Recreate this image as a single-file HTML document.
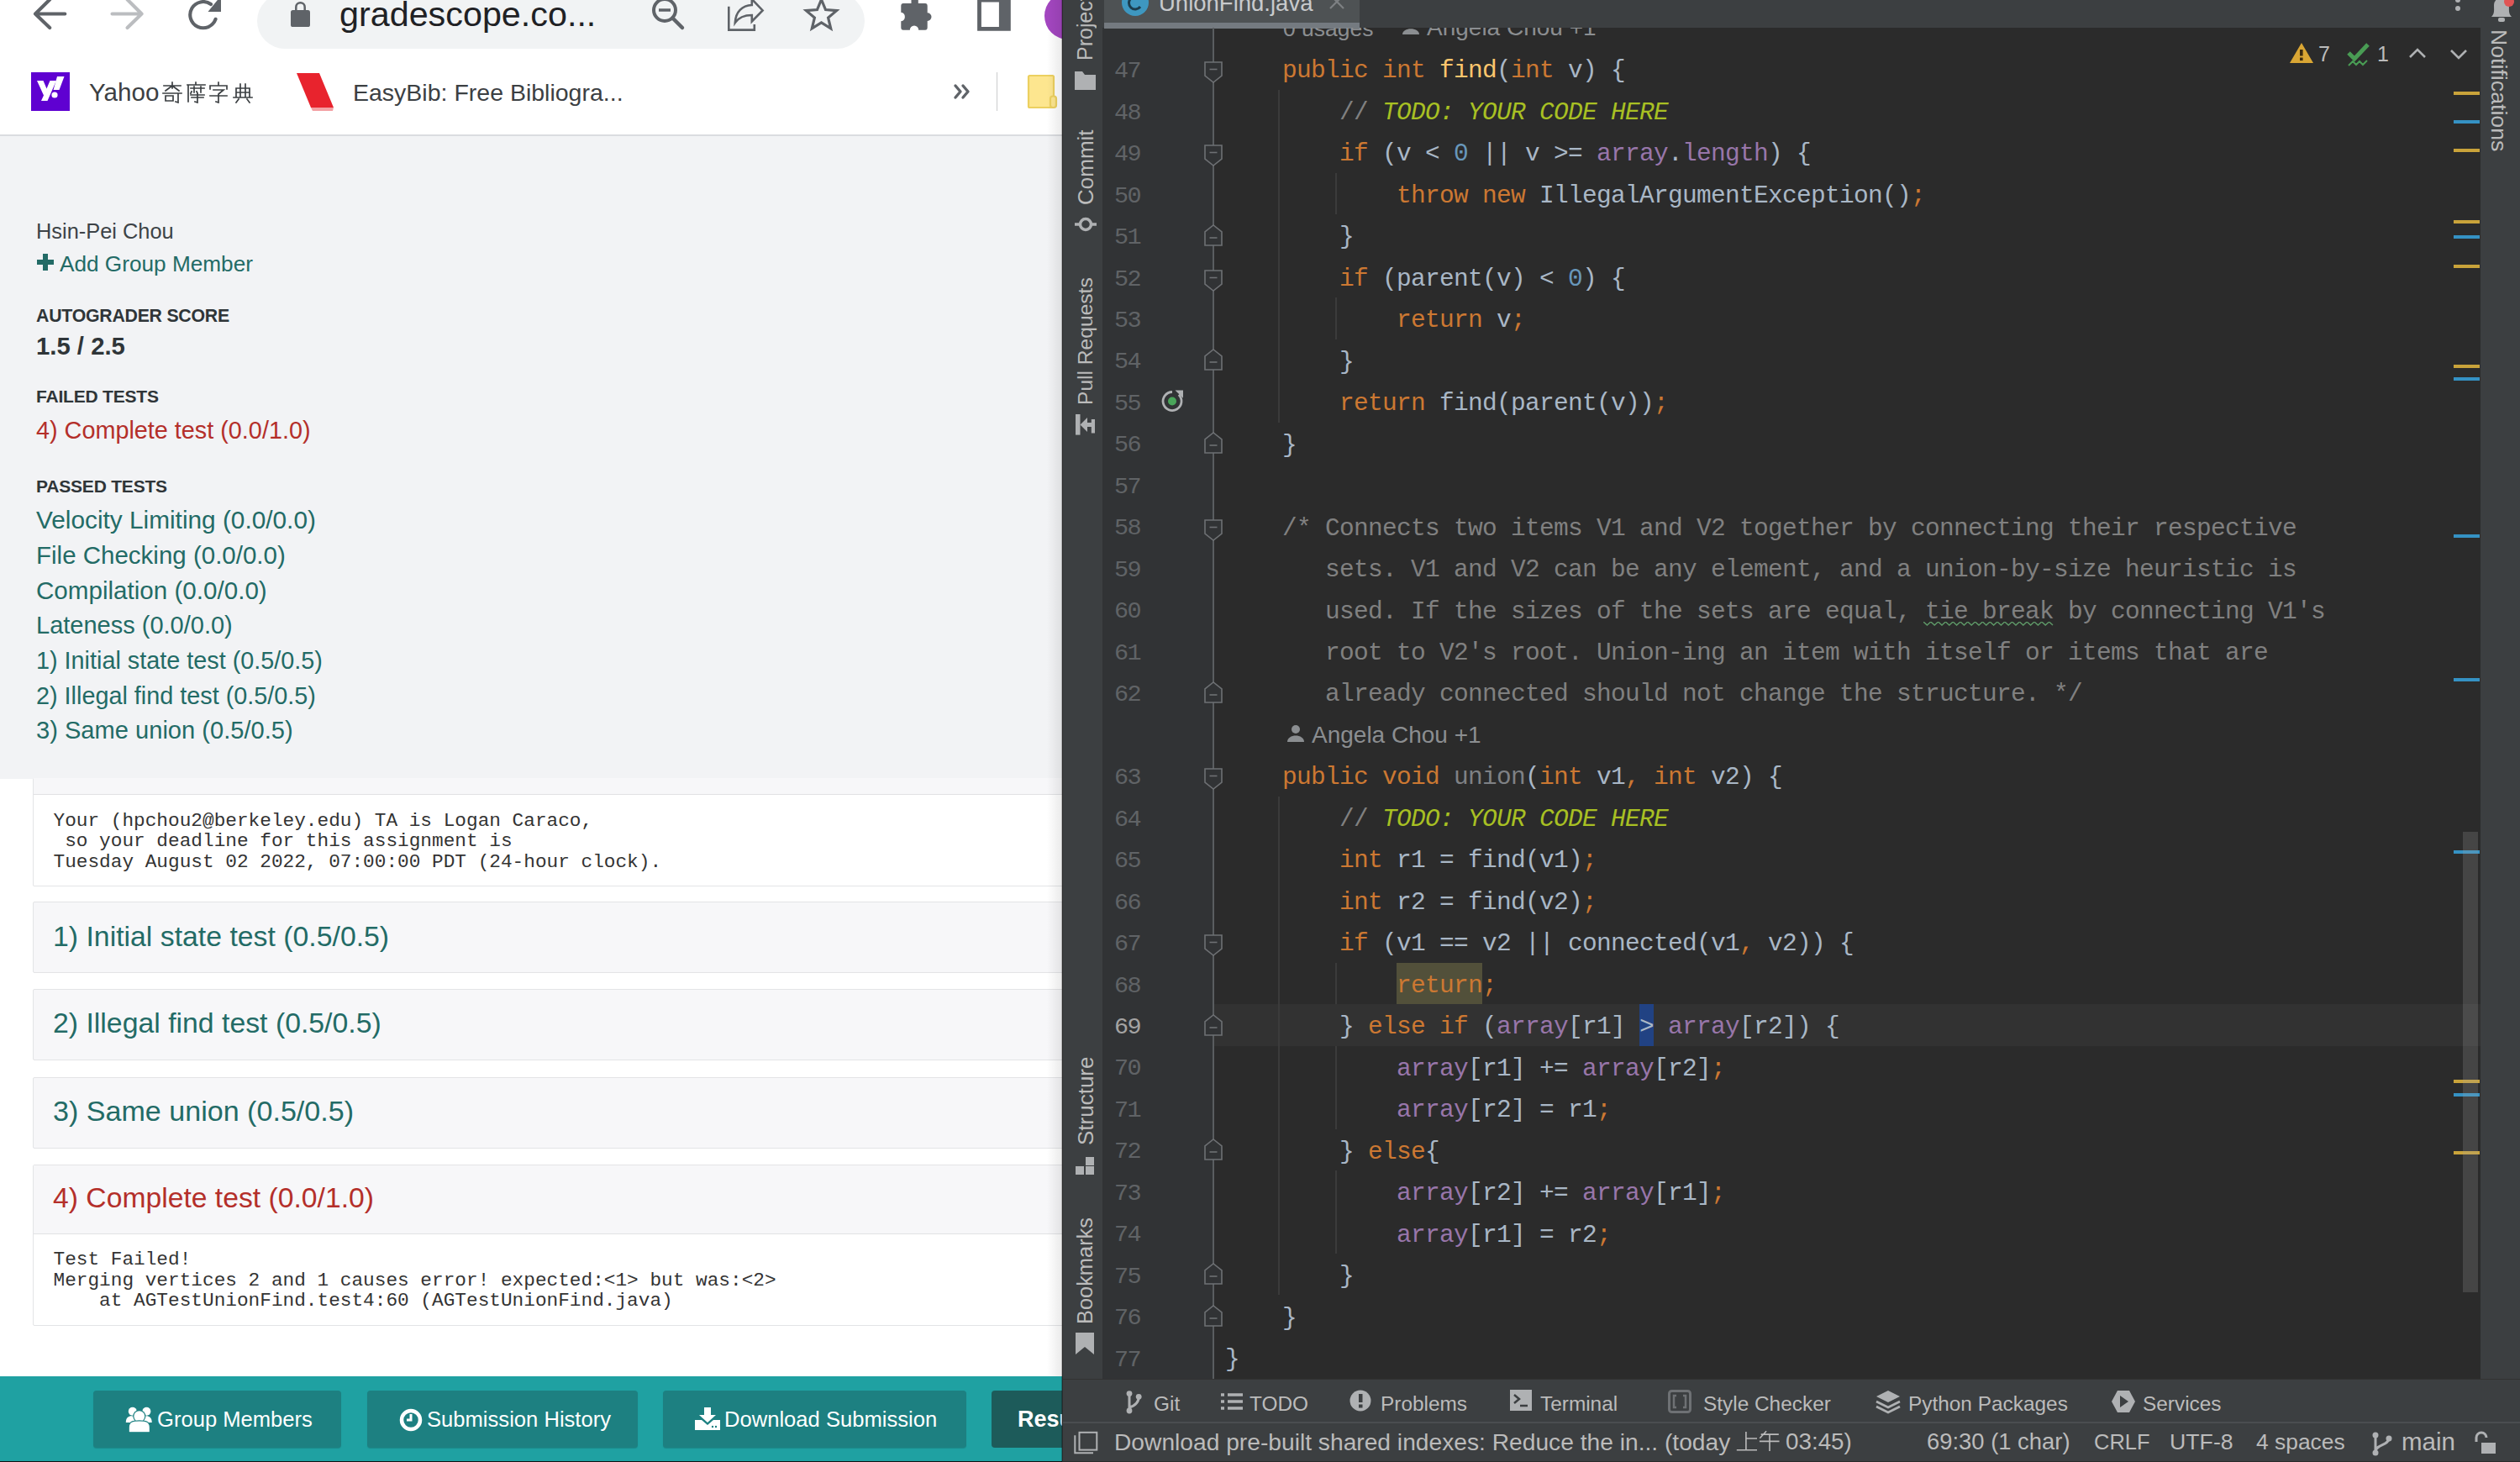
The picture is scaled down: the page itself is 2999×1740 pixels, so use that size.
<!DOCTYPE html><html><head><meta charset="utf-8"><style>
*{margin:0;padding:0;box-sizing:border-box}
html,body{width:2999px;height:1740px;overflow:hidden;background:#2b2b2b}
body{position:relative;font-family:"Liberation Sans",sans-serif}
.a{position:absolute}
.t{position:absolute;white-space:pre;line-height:1}
.code{position:absolute;left:1458.00px;white-space:pre;font-family:"Liberation Mono",monospace;font-size:29.50px;letter-spacing:-0.703px;height:49.47px;line-height:49.47px;color:#a9b7c6}
.ln{position:absolute;left:1300px;width:57px;text-align:right;font-family:"Liberation Mono",monospace;font-size:28.5px;letter-spacing:-1.6px;line-height:1;color:#606366;white-space:pre}
.vt{position:absolute;writing-mode:vertical-rl;white-space:pre;line-height:1;font-size:25px;color:#bbbbbb}
.box{position:absolute;left:39px;width:1300px;border:1.5px solid #e3e4e6;border-radius:2px;background:#f7f7f9}
</style></head><body><div class="a" style="left:0;top:0;width:1264px;height:1740px;background:#fff;overflow:hidden"><svg class="a" style="left:36.0px;top:-6.0px;" width="48.0" height="44.0" viewBox="0 0 48.0 44.0"><path d="M41.3 22.5 H6 M23.2 5.5 L6 22.5 L23.2 39" fill="none" stroke="#5f6368" stroke-width="4.1" stroke-linecap="round" stroke-linejoin="round"/></svg><svg class="a" style="left:128.0px;top:-6.0px;" width="48.0" height="44.0" viewBox="0 0 48.0 44.0"><path d="M5.5 22.5 H40.6 M23.6 5.5 L40.6 22.5 L23.6 39" fill="none" stroke="#bbbdc0" stroke-width="4.1" stroke-linecap="round" stroke-linejoin="round"/></svg><svg class="a" style="left:220.0px;top:-8.0px;" width="48.0" height="46.0" viewBox="0 0 48.0 46.0"><path d="M36.6 30.8 A15.6 15.6 0 1 1 31 13" fill="none" stroke="#5f6368" stroke-width="4.1" stroke-linecap="round"/><path d="M43 3 L43 21.9 L27.5 21.9 Z" fill="#5f6368"/></svg><div class="a" style="left:306.0px;top:-8.0px;width:723.0px;height:66.0px;background:#f1f3f4;border-radius:33px"></div><svg class="a" style="left:344.0px;top:-2.0px;" width="28.0" height="36.0" viewBox="0 0 28.0 36.0"><rect x="2" y="14.1" width="23" height="19.9" rx="2.6" fill="#5f6368"/><path d="M8.3 15 V10.4 A5.2 5.2 0 0 1 18.7 10.4 V15" fill="none" stroke="#5f6368" stroke-width="2.5"/></svg><div class="t" style="left:404.0px;top:-2.97px;font-size:41.30px;color:#202124;">gradescope.co...</div><svg class="a" style="left:772.0px;top:-6.0px;" width="46.0" height="44.0" viewBox="0 0 46.0 44.0"><circle cx="19" cy="18" r="13" fill="none" stroke="#5f6368" stroke-width="4"/><path d="M12 18 H26" stroke="#5f6368" stroke-width="3.5"/><path d="M28.5 27.5 L40 39" stroke="#5f6368" stroke-width="4.5" stroke-linecap="round"/></svg><svg class="a" style="left:862.0px;top:-6.0px;" width="50.0" height="46.0" viewBox="0 0 50.0 46.0"><path d="M5.3 13.7 V41.6 H35.8 V35" fill="none" stroke="#5f6368" stroke-width="2.6"/><path d="M12.8 33 C13.5 20 21 12.5 32.8 12 V5 L45.6 18.4 L32.8 31.5 V24 C24 24 17 27 12.8 33 Z" fill="none" stroke="#5f6368" stroke-width="2.6" stroke-linejoin="miter"/></svg><svg class="a" style="left:953.0px;top:-6.0px;" width="50.0" height="46.0" viewBox="0 0 50.0 46.0"><path d="M24.5 5.5 L29.5 17.6 L42.6 18.6 L32.6 27.1 L35.7 39.9 L24.5 33.0 L13.3 39.9 L16.4 27.1 L6.4 18.6 L19.5 17.6 Z" fill="none" stroke="#5f6368" stroke-width="3.2" stroke-linejoin="miter"/></svg><svg class="a" style="left:1068.0px;top:-6.0px;" width="48.0" height="46.0" viewBox="0 0 48.0 46.0"><path d="M7 10 H16.5 V0 H24.8 V10 H33 Q35.7 10 35.7 13 V21.3 A4.8 4.8 0 0 1 35.7 30.9 V38.8 Q35.7 41.8 33 41.8 H25.2 A5.2 5.2 0 0 0 14.8 41.8 H7 Q4.3 41.8 4.3 38.8 V31.3 A5.3 5.3 0 0 0 4.3 20.8 V13 Q4.3 10 7 10 Z" fill="#5f6368"/></svg><svg class="a" style="left:1160.0px;top:-6.0px;" width="48.0" height="46.0" viewBox="0 0 48.0 46.0"><path d="M3.1 0 H42.8 V42.7 H3.1 Z M7.9 8.6 V37.9 H28.9 V8.6 Z" fill="#5f6368" fill-rule="evenodd"/><rect x="28" y="0" width="1" height="1" fill="#5f6368" opacity="0"/></svg><div class="a" style="left:1242.6px;top:-8.8px;width:56.0px;height:56.0px;background:#a346c0;border-radius:50%"></div><div class="a" style="left:37.0px;top:86.0px;width:46.0px;height:46.0px;background:#5f01d1;"></div><svg class="a" style="left:37.0px;top:86.0px;" width="46.0" height="46.0" viewBox="0 0 46.0 46.0"><path d="M7 10 H14.5 L18.5 19.5 L22.5 10 H30 L19.5 34 H12 L15 27.5 Z" fill="#fff"/><path d="M31 5 H39.5 L33.5 21 H26.5 Z" fill="#fff"/><circle cx="28" cy="27" r="3.6" fill="#fff"/></svg><div class="t" style="left:106.0px;top:94.94px;font-size:29.60px;color:#3c4043;">Yahoo</div><svg class="a" style="left:192.0px;top:96.5px;" width="26.0" height="26.0" viewBox="0 0 26.0 26.0"><g fill="none" stroke="#3c4043" stroke-width="1.7" stroke-linecap="square"><path d="M3 5 H23 M13 1 V8 M13 5 L5 11 M13 5 L21 11 M2 14 H24 M20 14 V25 L17 24 M5 17 V23 H14 V17 Z"/></g></svg><svg class="a" style="left:219.5px;top:96.5px;" width="26.0" height="26.0" viewBox="0 0 26.0 26.0"><g fill="none" stroke="#3c4043" stroke-width="1.7" stroke-linecap="square"><path d="M13 1 V4 M3 4 H24 M4 4 V24 M7 8 H15 M11 6 V13 M8 12 L7 14 M14 12 L15 14 M16 8 H23 M19 6 V13 M7 16 H23 M8 19 H22 M15 14 V25 L12 24"/></g></svg><svg class="a" style="left:247.0px;top:96.5px;" width="26.0" height="26.0" viewBox="0 0 26.0 26.0"><g fill="none" stroke="#3c4043" stroke-width="1.7" stroke-linecap="square"><path d="M13 1 V4 M3 9 V5 H23 V9 M7 10 H19 L13 15 V25 L10 24 M3 17 H23"/></g></svg><svg class="a" style="left:276.0px;top:96.5px;" width="26.0" height="26.0" viewBox="0 0 26.0 26.0"><g fill="none" stroke="#3c4043" stroke-width="1.7" stroke-linecap="square"><path d="M5 8 H21 V19 M5 8 V19 M10 3 V19 M16 3 V19 M5 13 H21 M2 19 H24 M8 21 L5 25 M18 21 L21 25"/></g></svg><svg class="a" style="left:350.0px;top:84.0px;" width="50.0" height="52.0" viewBox="0 0 50.0 52.0"><path d="M3 3 L30 3 L47 44 L20 44 Z" fill="#e8232d"/><path d="M20 44 L47 44 L46 48 L22 48 Z" fill="#f3a0a3"/></svg><div class="t" style="left:420.0px;top:95.87px;font-size:28.50px;color:#3c4043;">EasyBib: Free Bibliogra...</div><svg class="a" style="left:1134.0px;top:99.0px;" width="24.0" height="20.0" viewBox="0 0 24.0 20.0"><path d="M3 3 L9 10 L3 17 M12 3 L18 10 L12 17" fill="none" stroke="#5f6368" stroke-width="3.4" stroke-linecap="round" stroke-linejoin="round"/></svg><div class="a" style="left:1185.6px;top:86.0px;width:1.8px;height:46.0px;background:#cbcccd;"></div><svg class="a" style="left:1221.0px;top:87.0px;" width="40.0" height="44.0" viewBox="0 0 40.0 44.0"><rect x="3" y="3" width="30" height="38" rx="1.5" fill="#fde68f" stroke="#ecd060" stroke-width="2.2"/><rect x="29" y="27.5" width="7" height="13.5" rx="3" fill="#fde68f" stroke="#ecd060" stroke-width="2.2"/></svg><div class="a" style="left:0.0px;top:160.0px;width:1264.0px;height:2.0px;background:#dadce0;"></div><div class="a" style="left:0.0px;top:162.0px;width:1264.0px;height:765.0px;background:#f2f3f5;"></div><div class="t" style="left:43.0px;top:262.99px;font-size:25.40px;color:#3d4347;">Hsin-Pei Chou</div><svg class="a" style="left:42.0px;top:300.0px;" width="24.0" height="24.0" viewBox="0 0 24.0 24.0"><path d="M12 2 V22 M2 12 H22" stroke="#236b66" stroke-width="6"/></svg><div class="t" style="left:71.0px;top:300.82px;font-size:26.20px;color:#236b66;">Add Group Member</div><div class="t" style="left:43.0px;top:365.97px;font-size:21.30px;color:#2f3538;font-weight:bold;letter-spacing:-0.25px">AUTOGRADER SCORE</div><div class="t" style="left:43.0px;top:397.19px;font-size:29.30px;color:#2f3538;font-weight:bold;">1.5 / 2.5</div><div class="t" style="left:43.0px;top:461.22px;font-size:21.00px;color:#2f3538;font-weight:bold;letter-spacing:-0.2px">FAILED TESTS</div><div class="t" style="left:43.0px;top:498.12px;font-size:28.80px;color:#b42f2a;">4) Complete test (0.0/1.0)</div><div class="t" style="left:43.0px;top:568.22px;font-size:21.00px;color:#2f3538;font-weight:bold;letter-spacing:-0.2px">PASSED TESTS</div><div class="t" style="left:43.0px;top:603.77px;font-size:29.80px;color:#236b66;">Velocity Limiting (0.0/0.0)</div><div class="t" style="left:43.0px;top:645.85px;font-size:29.50px;color:#236b66;">File Checking (0.0/0.0)</div><div class="t" style="left:43.0px;top:687.60px;font-size:29.60px;color:#236b66;">Compilation (0.0/0.0)</div><div class="t" style="left:43.0px;top:729.94px;font-size:29.00px;color:#236b66;">Lateness (0.0/0.0)</div><div class="t" style="left:43.0px;top:771.94px;font-size:28.80px;color:#236b66;">1) Initial state test (0.5/0.5)</div><div class="t" style="left:43.0px;top:813.77px;font-size:28.80px;color:#236b66;">2) Illegal find test (0.5/0.5)</div><div class="t" style="left:43.0px;top:855.34px;font-size:29.10px;color:#236b66;">3) Same union (0.5/0.5)</div><div class="box" style="top:926px;height:128.5px;border-top:none;background:#fff"><div class="a" style="left:0;top:0;width:100%;height:19.5px;background:#f7f7f9;border-bottom:1.5px solid #e1e2e4"></div></div><div class="t" style="left:63.5px;top:965.57px;font-size:22.75px;color:#333333;font-family:'Liberation Mono',monospace;">Your (hpchou2@berkeley.edu) TA is Logan Caraco,</div><div class="t" style="left:63.5px;top:990.07px;font-size:22.75px;color:#333333;font-family:'Liberation Mono',monospace;"> so your deadline for this assignment is</div><div class="t" style="left:63.5px;top:1014.57px;font-size:22.75px;color:#333333;font-family:'Liberation Mono',monospace;">Tuesday August 02 2022, 07:00:00 PDT (24-hour clock).</div><div class="box" style="top:1073.0px;height:85px"></div><div class="box" style="top:1177.0px;height:85px"></div><div class="box" style="top:1281.5px;height:85px"></div><div class="t" style="left:63.0px;top:1097.88px;font-size:33.80px;color:#236b66;">1) Initial state test (0.5/0.5)</div><div class="t" style="left:63.0px;top:1201.38px;font-size:33.80px;color:#236b66;">2) Illegal find test (0.5/0.5)</div><div class="t" style="left:63.0px;top:1305.13px;font-size:34.10px;color:#236b66;">3) Same union (0.5/0.5)</div><div class="box" style="top:1386px;height:192px;background:#fff"><div class="a" style="left:0;top:0;width:100%;height:82px;background:#f7f7f9;border-bottom:1.5px solid #e1e2e4"></div></div><div class="t" style="left:63.0px;top:1409.47px;font-size:33.70px;color:#b42f2a;">4) Complete test (0.0/1.0)</div><div class="t" style="left:63.5px;top:1488.07px;font-size:22.75px;color:#333333;font-family:'Liberation Mono',monospace;">Test Failed!</div><div class="t" style="left:63.5px;top:1512.77px;font-size:22.75px;color:#333333;font-family:'Liberation Mono',monospace;">Merging vertices 2 and 1 causes error! expected:&lt;1&gt; but was:&lt;2&gt;</div><div class="t" style="left:63.5px;top:1537.47px;font-size:22.75px;color:#333333;font-family:'Liberation Mono',monospace;">    at AGTestUnionFind.test4:60 (AGTestUnionFind.java)</div><div class="a" style="left:0.0px;top:1638.0px;width:1264.0px;height:102.0px;background:#1fa1a2;"></div><div class="a" style="left:0.0px;top:1738.5px;width:1264.0px;height:2.0px;background:#111;"></div><div class="a" style="left:111.0px;top:1655.0px;width:295.0px;height:68.0px;background:#1d8081;border-radius:4px;box-shadow:0 1px 1px rgba(0,0,0,0.15)"></div><div class="a" style="left:437.0px;top:1655.0px;width:321.5px;height:68.0px;background:#1d8081;border-radius:4px;box-shadow:0 1px 1px rgba(0,0,0,0.15)"></div><div class="a" style="left:789.0px;top:1655.0px;width:361.0px;height:68.0px;background:#1d8081;border-radius:4px;box-shadow:0 1px 1px rgba(0,0,0,0.15)"></div><div class="a" style="left:1180.0px;top:1655.0px;width:120.0px;height:68.0px;background:#1d5b5a;border-radius:4px"></div><svg class="a" style="left:148.0px;top:1674.0px;" width="36.0" height="34.0" viewBox="0 0 36.0 34.0"><circle cx="9.8" cy="5.8" r="5" fill="#fff"/><circle cx="26.4" cy="5.8" r="5" fill="#fff"/><path d="M1.8 19 C1.8 11 8 10.5 12 12 L14 19 Z M32.8 19 C32.8 11 26.6 10.5 22.6 12 L20.6 19 Z" fill="#fff"/><circle cx="17.8" cy="11.6" r="7.6" fill="#1d8081"/><circle cx="17.8" cy="11.6" r="6.4" fill="#fff"/><path d="M5.2 30 V25 C5.2 18 10 16.8 17.8 16.8 C25.6 16.8 30.4 18 30.4 25 V30 Q30.4 30.8 29 30.8 H6.6 Q5.2 30.8 5.2 30 Z" fill="#fff" stroke="#1d8081" stroke-width="1.2"/></svg><div class="t" style="left:187.0px;top:1676.82px;font-size:25.60px;color:#ffffff;">Group Members</div><svg class="a" style="left:474.0px;top:1675.0px;" width="30.0" height="30.0" viewBox="0 0 30.0 30.0"><circle cx="15" cy="15" r="11" fill="none" stroke="#fff" stroke-width="4.5"/><path d="M15 8 V15 H10" fill="none" stroke="#fff" stroke-width="3"/></svg><div class="t" style="left:508.0px;top:1676.82px;font-size:25.60px;color:#ffffff;">Submission History</div><svg class="a" style="left:826.0px;top:1674.0px;" width="32.0" height="28.0" viewBox="0 0 32.0 28.0"><path d="M12 1 H20 V10 H26 L16 19 L6 10 H12 Z" fill="#fff"/><path d="M1 16 H9 L16 22 L23 16 H31 V28 H1 Z" fill="#fff"/><circle cx="22" cy="24" r="1.2" fill="#1d8081"/><circle cx="26" cy="24" r="1.2" fill="#1d8081"/></svg><div class="t" style="left:862.0px;top:1676.82px;font-size:25.60px;color:#ffffff;">Download Submission</div><div class="t" style="left:1211.0px;top:1675.64px;font-size:27.00px;color:#ffffff;font-weight:bold;">Resu</div><div class="a" style="left:1246.0px;top:0.0px;width:17.0px;height:1638.0px;background:linear-gradient(to right,rgba(0,0,0,0),rgba(0,0,0,0.08));"></div><div class="a" style="left:1263.0px;top:0.0px;width:1.0px;height:1740.0px;background:rgba(0,0,0,0.28);"></div></div><div class="a" style="left:1264.0px;top:0.0px;width:1.0px;height:1740.0px;background:#2b2b2b;"></div><div class="a" style="left:1265.0px;top:0.0px;width:47.0px;height:1641.0px;background:#3c3f41;"></div><div class="a" style="left:1312.0px;top:0.0px;width:1640.0px;height:33.0px;background:#3c3f41;"></div><div class="a" style="left:2952.0px;top:0.0px;width:47.0px;height:1641.0px;background:#3c3f41;"></div><div class="a" style="left:1312.0px;top:33.0px;width:132.0px;height:1608.0px;background:#313335;"></div><div class="a" style="left:1444.0px;top:33.0px;width:1508.0px;height:1608.0px;background:#2b2b2b;"></div><div class="a" style="left:1265.0px;top:1641.0px;width:1734.0px;height:99.0px;background:#3c3f41;"></div><div class="a" style="left:1265.0px;top:1641.0px;width:1734.0px;height:1.0px;background:#323232;"></div><div class="a" style="left:1265.0px;top:1692.0px;width:1734.0px;height:1.5px;background:#4a4d50;"></div><div class="a" style="left:1265.0px;top:1738.5px;width:1734.0px;height:2.0px;background:#2b2b2b;"></div><div class="a" style="left:1444.0px;top:1195.2px;width:1508.0px;height:49.5px;background:#323232;"></div><div class="a" style="left:1662.0px;top:1145.7px;width:102.0px;height:49.5px;background:#52503a;"></div><div class="a" style="left:1951.0px;top:1195.2px;width:17.0px;height:49.5px;background:#214283;"></div><div class="a" style="left:1314.0px;top:0.0px;width:304.0px;height:27.0px;background:#4e5254;"></div><div class="a" style="left:1314.0px;top:27.0px;width:304.0px;height:6.5px;background:#747a80;"></div><svg class="a" style="left:1333.0px;top:-15.0px;" width="36.0" height="36.0" viewBox="0 0 36.0 36.0"><circle cx="18" cy="18" r="16" fill="#3e97c0"/><path d="M24 14 A7.5 7.5 0 1 0 24 23" fill="none" stroke="#1b3c4d" stroke-width="3"/></svg><div class="a" style="left:1312px;top:0;width:1640px;height:27px;overflow:hidden"><div class="t" style="left:67.0px;top:-9.68px;font-size:27.50px;color:#c8cacc;">UnionFind.java</div></div><svg class="a" style="left:1579.0px;top:-6.0px;" width="24.0" height="20.0" viewBox="0 0 24.0 20.0"><path d="M4 0 L20 16 M20 0 L4 16" stroke="#7d8083" stroke-width="2.2"/></svg><svg class="a" style="left:2918.0px;top:-4.0px;" width="14.0" height="22.0" viewBox="0 0 14.0 22.0"><circle cx="7" cy="4" r="3" fill="#afb1b3"/><circle cx="7" cy="14" r="3" fill="#afb1b3"/></svg><div class="a" style="left:1444px;top:33px;width:1508px;height:40px;overflow:hidden"><div class="t" style="left:83.0px;top:-12.44px;font-size:26.50px;color:#8b8e91;">0 usages</div><svg class="a" style="left:224.0px;top:-12.0px;" width="22.0" height="22.0" viewBox="0 0 22.0 22.0"><circle cx="11" cy="6" r="5" fill="#8b8e91"/><path d="M1 20 C1 11 21 11 21 20 Z" fill="#8b8e91"/></svg><div class="t" style="left:254.0px;top:-13.71px;font-size:28.00px;color:#8b8e91;">Angela Chou +1</div></div><svg class="a" style="left:1531.0px;top:862.0px;" width="22.0" height="22.0" viewBox="0 0 22.0 22.0"><circle cx="11" cy="6" r="5" fill="#8b8e91"/><path d="M1 21 C1 11 21 11 21 21 Z" fill="#8b8e91"/></svg><div class="t" style="left:1561.0px;top:861.29px;font-size:28.00px;color:#8b8e91;">Angela Chou +1</div><div class="a" style="left:1521.4px;top:106.9px;width:1.2px;height:395.8px;background:#3b3b3b;"></div><div class="a" style="left:1589.4px;top:205.8px;width:1.2px;height:49.5px;background:#3b3b3b;"></div><div class="a" style="left:1589.4px;top:354.2px;width:1.2px;height:49.5px;background:#3b3b3b;"></div><div class="a" style="left:1521.4px;top:947.9px;width:1.2px;height:593.6px;background:#3b3b3b;"></div><div class="a" style="left:1589.4px;top:1145.7px;width:1.2px;height:49.5px;background:#3b3b3b;"></div><div class="a" style="left:1589.4px;top:1244.7px;width:1.2px;height:98.9px;background:#3b3b3b;"></div><div class="a" style="left:1589.4px;top:1393.1px;width:1.2px;height:98.9px;background:#3b3b3b;"></div><div class="a" style="left:1443.3px;top:33.0px;width:1.5px;height:1608.0px;background:#5a5d60;"></div><svg class="a" style="left:1433.0px;top:73.3px;" width="22.0" height="26.0" viewBox="0 0 22.0 26.0"><path d="M1 1 H21 V17 L11 25 L1 17 Z" fill="#313335" stroke="#6e7174" stroke-width="1.6"/><path d="M6.5 9.5 H15.5" stroke="#6e7174" stroke-width="1.6"/></svg><svg class="a" style="left:1433.0px;top:172.2px;" width="22.0" height="26.0" viewBox="0 0 22.0 26.0"><path d="M1 1 H21 V17 L11 25 L1 17 Z" fill="#313335" stroke="#6e7174" stroke-width="1.6"/><path d="M6.5 9.5 H15.5" stroke="#6e7174" stroke-width="1.6"/></svg><svg class="a" style="left:1433.0px;top:320.6px;" width="22.0" height="26.0" viewBox="0 0 22.0 26.0"><path d="M1 1 H21 V17 L11 25 L1 17 Z" fill="#313335" stroke="#6e7174" stroke-width="1.6"/><path d="M6.5 9.5 H15.5" stroke="#6e7174" stroke-width="1.6"/></svg><svg class="a" style="left:1433.0px;top:617.5px;" width="22.0" height="26.0" viewBox="0 0 22.0 26.0"><path d="M1 1 H21 V17 L11 25 L1 17 Z" fill="#313335" stroke="#6e7174" stroke-width="1.6"/><path d="M6.5 9.5 H15.5" stroke="#6e7174" stroke-width="1.6"/></svg><svg class="a" style="left:1433.0px;top:914.3px;" width="22.0" height="26.0" viewBox="0 0 22.0 26.0"><path d="M1 1 H21 V17 L11 25 L1 17 Z" fill="#313335" stroke="#6e7174" stroke-width="1.6"/><path d="M6.5 9.5 H15.5" stroke="#6e7174" stroke-width="1.6"/></svg><svg class="a" style="left:1433.0px;top:1112.2px;" width="22.0" height="26.0" viewBox="0 0 22.0 26.0"><path d="M1 1 H21 V17 L11 25 L1 17 Z" fill="#313335" stroke="#6e7174" stroke-width="1.6"/><path d="M6.5 9.5 H15.5" stroke="#6e7174" stroke-width="1.6"/></svg><svg class="a" style="left:1433.0px;top:266.6px;" width="22.0" height="26.0" viewBox="0 0 22.0 26.0"><path d="M1 25 H21 V9 L11 1 L1 9 Z" fill="#313335" stroke="#6e7174" stroke-width="1.6"/><path d="M6.5 16 H15.5" stroke="#6e7174" stroke-width="1.6"/></svg><svg class="a" style="left:1433.0px;top:415.0px;" width="22.0" height="26.0" viewBox="0 0 22.0 26.0"><path d="M1 25 H21 V9 L11 1 L1 9 Z" fill="#313335" stroke="#6e7174" stroke-width="1.6"/><path d="M6.5 16 H15.5" stroke="#6e7174" stroke-width="1.6"/></svg><svg class="a" style="left:1433.0px;top:513.9px;" width="22.0" height="26.0" viewBox="0 0 22.0 26.0"><path d="M1 25 H21 V9 L11 1 L1 9 Z" fill="#313335" stroke="#6e7174" stroke-width="1.6"/><path d="M6.5 16 H15.5" stroke="#6e7174" stroke-width="1.6"/></svg><svg class="a" style="left:1433.0px;top:810.7px;" width="22.0" height="26.0" viewBox="0 0 22.0 26.0"><path d="M1 25 H21 V9 L11 1 L1 9 Z" fill="#313335" stroke="#6e7174" stroke-width="1.6"/><path d="M6.5 16 H15.5" stroke="#6e7174" stroke-width="1.6"/></svg><svg class="a" style="left:1433.0px;top:1206.5px;" width="22.0" height="26.0" viewBox="0 0 22.0 26.0"><path d="M1 25 H21 V9 L11 1 L1 9 Z" fill="#313335" stroke="#6e7174" stroke-width="1.6"/><path d="M6.5 16 H15.5" stroke="#6e7174" stroke-width="1.6"/></svg><svg class="a" style="left:1433.0px;top:1354.9px;" width="22.0" height="26.0" viewBox="0 0 22.0 26.0"><path d="M1 25 H21 V9 L11 1 L1 9 Z" fill="#313335" stroke="#6e7174" stroke-width="1.6"/><path d="M6.5 16 H15.5" stroke="#6e7174" stroke-width="1.6"/></svg><svg class="a" style="left:1433.0px;top:1503.3px;" width="22.0" height="26.0" viewBox="0 0 22.0 26.0"><path d="M1 25 H21 V9 L11 1 L1 9 Z" fill="#313335" stroke="#6e7174" stroke-width="1.6"/><path d="M6.5 16 H15.5" stroke="#6e7174" stroke-width="1.6"/></svg><svg class="a" style="left:1433.0px;top:1552.8px;" width="22.0" height="26.0" viewBox="0 0 22.0 26.0"><path d="M1 25 H21 V9 L11 1 L1 9 Z" fill="#313335" stroke="#6e7174" stroke-width="1.6"/><path d="M6.5 16 H15.5" stroke="#6e7174" stroke-width="1.6"/></svg><svg class="a" style="left:1381.0px;top:463.0px;" width="30.0" height="30.0" viewBox="0 0 30.0 30.0"><path d="M14 3.5 A11 11 0 1 0 21.8 6.7" fill="none" stroke="#afb1b3" stroke-width="2.8"/><path d="M27 1.4 L27 10.8 L17.5 1.4 Z" fill="#afb1b3"/><circle cx="14" cy="14.5" r="5" fill="#4aa55a"/></svg><div class="code" style="top:60.42px">    <span style="color:#cc7832">public</span> <span style="color:#cc7832">int</span> <span style="color:#ffc66d">find</span>(<span style="color:#cc7832">int</span> v) {</div><div class="ln" style="top:71.17px">47</div><div class="code" style="top:109.89px">        <span style="color:#808080">// </span><span style="color:#a8c023;font-style:italic">TODO: YOUR CODE HERE</span></div><div class="ln" style="top:120.64px">48</div><div class="code" style="top:159.36px">        <span style="color:#cc7832">if</span> (v &lt; <span style="color:#6897bb">0</span> || v &gt;= <span style="color:#9876aa">array</span>.<span style="color:#9876aa">length</span>) {</div><div class="ln" style="top:170.11px">49</div><div class="code" style="top:208.83px">            <span style="color:#cc7832">throw</span> <span style="color:#cc7832">new</span> IllegalArgumentException()<span style="color:#cc7832">;</span></div><div class="ln" style="top:219.58px">50</div><div class="code" style="top:258.30px">        }</div><div class="ln" style="top:269.05px">51</div><div class="code" style="top:307.77px">        <span style="color:#cc7832">if</span> (parent(v) &lt; <span style="color:#6897bb">0</span>) {</div><div class="ln" style="top:318.52px">52</div><div class="code" style="top:357.24px">            <span style="color:#cc7832">return</span> v<span style="color:#cc7832">;</span></div><div class="ln" style="top:367.99px">53</div><div class="code" style="top:406.71px">        }</div><div class="ln" style="top:417.46px">54</div><div class="code" style="top:456.18px">        <span style="color:#cc7832">return</span> find(parent(v))<span style="color:#cc7832">;</span></div><div class="ln" style="top:466.93px">55</div><div class="code" style="top:505.65px">    }</div><div class="ln" style="top:516.40px">56</div><div class="code" style="top:555.12px"></div><div class="ln" style="top:565.87px">57</div><div class="code" style="top:604.59px"><span style="color:#808080">    /* Connects two items V1 and V2 together by connecting their respective</span></div><div class="ln" style="top:615.34px">58</div><div class="code" style="top:654.06px"><span style="color:#808080">       sets. V1 and V2 can be any element, and a union-by-size heuristic is</span></div><div class="ln" style="top:664.81px">59</div><div class="code" style="top:703.53px"><span style="color:#808080">       used. If the sizes of the sets are equal, tie break by connecting V1's</span></div><div class="ln" style="top:714.28px">60</div><div class="code" style="top:753.00px"><span style="color:#808080">       root to V2's root. Union-ing an item with itself or items that are</span></div><div class="ln" style="top:763.75px">61</div><div class="code" style="top:802.47px"><span style="color:#808080">       already connected should not change the structure. */</span></div><div class="ln" style="top:813.22px">62</div><div class="code" style="top:901.41px">    <span style="color:#cc7832">public</span> <span style="color:#cc7832">void</span> <span style="color:#7f8185">union</span>(<span style="color:#cc7832">int</span> v1<span style="color:#cc7832">,</span> <span style="color:#cc7832">int</span> v2) {</div><div class="ln" style="top:912.16px">63</div><div class="code" style="top:950.88px">        <span style="color:#808080">// </span><span style="color:#a8c023;font-style:italic">TODO: YOUR CODE HERE</span></div><div class="ln" style="top:961.63px">64</div><div class="code" style="top:1000.35px">        <span style="color:#cc7832">int</span> r1 = find(v1)<span style="color:#cc7832">;</span></div><div class="ln" style="top:1011.10px">65</div><div class="code" style="top:1049.82px">        <span style="color:#cc7832">int</span> r2 = find(v2)<span style="color:#cc7832">;</span></div><div class="ln" style="top:1060.57px">66</div><div class="code" style="top:1099.29px">        <span style="color:#cc7832">if</span> (v1 == v2 || connected(v1<span style="color:#cc7832">,</span> v2)) {</div><div class="ln" style="top:1110.04px">67</div><div class="code" style="top:1148.76px">            <span style="color:#cc7832">return</span><span style="color:#cc7832">;</span></div><div class="ln" style="top:1159.51px">68</div><div class="code" style="top:1198.23px">        } <span style="color:#cc7832">else</span> <span style="color:#cc7832">if</span> (<span style="color:#9876aa">array</span>[r1] &gt; <span style="color:#9876aa">array</span>[r2]) {</div><div class="ln" style="top:1208.98px;color:#a4a3a3">69</div><div class="code" style="top:1247.70px">            <span style="color:#9876aa">array</span>[r1] += <span style="color:#9876aa">array</span>[r2]<span style="color:#cc7832">;</span></div><div class="ln" style="top:1258.45px">70</div><div class="code" style="top:1297.17px">            <span style="color:#9876aa">array</span>[r2] = r1<span style="color:#cc7832">;</span></div><div class="ln" style="top:1307.92px">71</div><div class="code" style="top:1346.64px">        } <span style="color:#cc7832">else</span>{</div><div class="ln" style="top:1357.39px">72</div><div class="code" style="top:1396.11px">            <span style="color:#9876aa">array</span>[r2] += <span style="color:#9876aa">array</span>[r1]<span style="color:#cc7832">;</span></div><div class="ln" style="top:1406.86px">73</div><div class="code" style="top:1445.58px">            <span style="color:#9876aa">array</span>[r1] = r2<span style="color:#cc7832">;</span></div><div class="ln" style="top:1456.33px">74</div><div class="code" style="top:1495.05px">        }</div><div class="ln" style="top:1505.80px">75</div><div class="code" style="top:1544.52px">    }</div><div class="ln" style="top:1555.27px">76</div><div class="code" style="top:1593.99px">}</div><div class="ln" style="top:1604.74px">77</div><svg class="a" style="left:2289.0px;top:740.0px;" width="155.0" height="6.0" viewBox="0 0 155.0 6.0"><path d="M0 0 L0.0 0.0 L4.4 4.0 L8.8 0.0 L13.2 4.0 L17.6 0.0 L22.0 4.0 L26.4 0.0 L30.8 4.0 L35.2 0.0 L39.6 4.0 L44.0 0.0 L48.4 4.0 L52.8 0.0 L57.2 4.0 L61.6 0.0 L66.0 4.0 L70.4 0.0 L74.8 4.0 L79.2 0.0 L83.6 4.0 L88.0 0.0 L92.4 4.0 L96.8 0.0 L101.2 4.0 L105.6 0.0 L110.0 4.0 L114.4 0.0 L118.8 4.0 L123.2 0.0 L127.6 4.0 L132.0 0.0 L136.4 4.0 L140.8 0.0 L145.2 4.0 L149.6 0.0 L154.0 4.0 " fill="none" stroke="#5f9a68" stroke-width="1.4"/></svg><svg class="a" style="left:2724.0px;top:49.0px;" width="32.0" height="28.0" viewBox="0 0 32.0 28.0"><path d="M15 2 L29 26 H1 Z" fill="#d9a634"/><rect x="13" y="10" width="3.6" height="7.5" fill="#3a2a10"/><rect x="13" y="19.5" width="3.6" height="3.6" fill="#3a2a10"/></svg><div class="t" style="left:2759.0px;top:52.33px;font-size:25.00px;color:#bbbbbb;">7</div><svg class="a" style="left:2792.0px;top:51.0px;" width="32.0" height="30.0" viewBox="0 0 32.0 30.0"><path d="M3 12 L10 19 L26 2" fill="none" stroke="#499c54" stroke-width="5"/><path d="M3 27 L8 22 L12 26 L16 22 L20 26 L25 21" fill="none" stroke="#499c54" stroke-width="2"/></svg><div class="t" style="left:2829.0px;top:52.33px;font-size:25.00px;color:#bbbbbb;">1</div><svg class="a" style="left:2865.0px;top:55.0px;" width="24.0" height="16.0" viewBox="0 0 24.0 16.0"><path d="M3 13 L12 4 L21 13" fill="none" stroke="#afb1b3" stroke-width="2.6"/></svg><svg class="a" style="left:2914.0px;top:57.0px;" width="24.0" height="16.0" viewBox="0 0 24.0 16.0"><path d="M3 3 L12 12 L21 3" fill="none" stroke="#afb1b3" stroke-width="2.6"/></svg><div class="a" style="left:2920.0px;top:109.3px;width:31.0px;height:4.0px;background:#c9a33a;"></div><div class="a" style="left:2920.0px;top:143.2px;width:31.0px;height:4.0px;background:#3592c4;"></div><div class="a" style="left:2920.0px;top:176.6px;width:31.0px;height:4.0px;background:#c9a33a;"></div><div class="a" style="left:2920.0px;top:262.2px;width:31.0px;height:4.0px;background:#c9a33a;"></div><div class="a" style="left:2920.0px;top:280.0px;width:31.0px;height:4.0px;background:#3592c4;"></div><div class="a" style="left:2920.0px;top:314.6px;width:31.0px;height:4.0px;background:#c9a33a;"></div><div class="a" style="left:2920.0px;top:433.6px;width:31.0px;height:4.0px;background:#c9a33a;"></div><div class="a" style="left:2920.0px;top:449.0px;width:31.0px;height:4.0px;background:#3592c4;"></div><div class="a" style="left:2920.0px;top:636.0px;width:31.0px;height:4.0px;background:#3592c4;"></div><div class="a" style="left:2920.0px;top:806.7px;width:31.0px;height:4.0px;background:#3592c4;"></div><div class="a" style="left:2920.0px;top:1012.4px;width:31.0px;height:4.0px;background:#3592c4;"></div><div class="a" style="left:2920.0px;top:1284.6px;width:31.0px;height:4.0px;background:#c9a33a;"></div><div class="a" style="left:2920.0px;top:1300.5px;width:31.0px;height:4.0px;background:#3592c4;"></div><div class="a" style="left:2920.0px;top:1370.0px;width:31.0px;height:4.0px;background:#c9a33a;"></div><div class="a" style="left:2931.0px;top:990.0px;width:18.0px;height:548.0px;background:rgba(166,166,166,0.22);"></div><div class="vt" style="left:1279px;top:-40px;height:112px;transform:rotate(180deg)">Project</div><svg class="a" style="left:1278.0px;top:84.0px;" width="28.0" height="24.0" viewBox="0 0 28.0 24.0"><path d="M1 1 H10 L13 5 H26 V23 H1 Z" fill="#afb1b3"/></svg><div class="vt" style="left:1279px;top:154px;height:90px;transform:rotate(180deg);font-size:26px">Commit</div><svg class="a" style="left:1279.0px;top:256.0px;" width="26.0" height="22.0" viewBox="0 0 26.0 22.0"><circle cx="13" cy="11" r="6.5" fill="none" stroke="#afb1b3" stroke-width="3.5"/><path d="M0 11 H6 M20 11 H26" stroke="#afb1b3" stroke-width="3.5"/></svg><div class="vt" style="left:1279.5px;top:330px;height:152px;transform:rotate(180deg);font-size:24.6px">Pull Requests</div><svg class="a" style="left:1279.0px;top:491.0px;" width="26.0" height="28.0" viewBox="0 0 26.0 28.0"><rect x="1" y="2" width="5.5" height="24.6" fill="#afb1b3"/><rect x="19.8" y="8" width="4.2" height="16.5" fill="#afb1b3"/><rect x="10" y="12" width="14" height="5" fill="#afb1b3"/><path d="M6.5 14.5 L15 6 V23 Z" fill="#afb1b3"/></svg><div class="vt" style="left:1279px;top:1257px;height:106px;transform:rotate(180deg);font-size:26px">Structure</div><svg class="a" style="left:1279.0px;top:1376.0px;" width="24.0" height="24.0" viewBox="0 0 24.0 24.0"><rect x="1" y="12" width="10" height="10" fill="#afb1b3"/><rect x="13" y="12" width="10" height="10" fill="#afb1b3"/><rect x="13" y="1" width="10" height="10" fill="#afb1b3"/></svg><div class="vt" style="left:1279px;top:1450px;height:126px;transform:rotate(180deg);font-size:25.4px">Bookmarks</div><svg class="a" style="left:1279.0px;top:1585.0px;" width="24.0" height="28.0" viewBox="0 0 24.0 28.0"><path d="M1 1 H23 V27 L12 18 L1 27 Z" fill="#afb1b3"/></svg><svg class="a" style="left:2961.0px;top:-6.0px;" width="32.0" height="34.0" viewBox="0 0 32.0 34.0"><path d="M4 26 C8 22 7 18 7 12 A9 9 0 0 1 25 12 C25 18 24 22 28 26 Z" fill="#afb1b3"/><rect x="12" y="27" width="8" height="5" rx="2" fill="#afb1b3"/><circle cx="25" cy="8" r="6" fill="#e05555"/></svg><div class="vt" style="left:2960px;top:35px;height:150px;font-size:26.7px">Notifications</div><svg class="a" style="left:1337.0px;top:1654.0px;" width="26.0" height="30.0" viewBox="0 0 26.0 30.0"><circle cx="7" cy="4.6" r="3.4" fill="#afb1b3"/><circle cx="18.2" cy="8.3" r="3.4" fill="#afb1b3"/><circle cx="7" cy="25" r="3.4" fill="#afb1b3"/><path d="M7 4.6 V25 M18.2 8.3 C18.2 15 14 19 7 21" fill="none" stroke="#afb1b3" stroke-width="3"/></svg><div class="t" style="left:1373.0px;top:1658.64px;font-size:24.40px;color:#bbbbbb;">Git</div><svg class="a" style="left:1452.0px;top:1658.0px;" width="28.0" height="22.0" viewBox="0 0 28.0 22.0"><path d="M1 2 H5 M9 2 H27 M1 10 H5 M9 10 H27 M1 18 H5 M9 18 H27" stroke="#afb1b3" stroke-width="3.6"/></svg><div class="t" style="left:1487.0px;top:1658.64px;font-size:24.40px;color:#bbbbbb;">TODO</div><svg class="a" style="left:1606.0px;top:1654.0px;" width="28.0" height="28.0" viewBox="0 0 28.0 28.0"><circle cx="13" cy="13" r="12.5" fill="#afb1b3"/><rect x="11" y="5" width="4.5" height="10" fill="#3c3f41"/><rect x="11" y="17.5" width="4.5" height="4" fill="#3c3f41"/></svg><div class="t" style="left:1643.0px;top:1658.64px;font-size:24.40px;color:#bbbbbb;">Problems</div><svg class="a" style="left:1797.0px;top:1654.0px;" width="28.0" height="26.0" viewBox="0 0 28.0 26.0"><rect x="0" y="0" width="26" height="25" fill="#afb1b3"/><path d="M5 6 L11 11 L5 16 M12 19 H21" fill="none" stroke="#3c3f41" stroke-width="2.5"/></svg><div class="t" style="left:1833.0px;top:1658.64px;font-size:24.40px;color:#bbbbbb;">Terminal</div><svg class="a" style="left:1985.0px;top:1654.0px;" width="30.0" height="28.0" viewBox="0 0 30.0 28.0"><rect x="1.5" y="1.5" width="25" height="25" rx="3" fill="none" stroke="#6e7174" stroke-width="3"/><path d="M10 7 H7 V21 H10 M18 7 H21 V21 H18" fill="none" stroke="#6e7174" stroke-width="2.5"/></svg><div class="t" style="left:2027.0px;top:1658.64px;font-size:24.40px;color:#bbbbbb;">Style Checker</div><svg class="a" style="left:2232.0px;top:1654.0px;" width="32.0" height="30.0" viewBox="0 0 32.0 30.0"><path d="M15 1 L29 8 L15 15 L1 8 Z" fill="#afb1b3"/><path d="M1 14 L15 21 L29 14 M1 20 L15 27 L29 20" fill="none" stroke="#afb1b3" stroke-width="2.8"/></svg><div class="t" style="left:2271.0px;top:1658.64px;font-size:24.40px;color:#bbbbbb;">Python Packages</div><svg class="a" style="left:2512.0px;top:1654.0px;" width="30.0" height="28.0" viewBox="0 0 30.0 28.0"><path d="M8 1 H22 L29 14 L22 27 H8 L1 14 Z" fill="#afb1b3"/><path d="M11 7 L21 14 L11 21 Z" fill="#3c3f41"/></svg><div class="t" style="left:2550.0px;top:1658.64px;font-size:24.40px;color:#bbbbbb;">Services</div><svg class="a" style="left:1277.0px;top:1702.0px;" width="32.0" height="32.0" viewBox="0 0 32.0 32.0"><rect x="7.5" y="2.8" width="20.8" height="20.8" fill="none" stroke="#afb1b3" stroke-width="2"/><path d="M2.3 6.3 V27.2 H24" fill="none" stroke="#afb1b3" stroke-width="2"/></svg><div class="t" style="left:1326.0px;top:1701.62px;font-size:28.20px;color:#bbbbbb;">Download pre-built shared indexes: Reduce the in... (today</div><svg class="a" style="left:2064.0px;top:1700.0px;" width="56.0" height="30.0" viewBox="0 0 56.0 30.0"><g fill="none" stroke="#bbbbbb" stroke-width="1.6"><path d="M13.9 3.9 V25.7 M13.9 12 H27 M2.8 25.7 H27"/><path d="M38.1 3.2 L30.3 11.8 M31.7 7.1 H52.8 M29.9 15.4 H53.5 M42 7 V27"/></g></svg><div class="t" style="left:2125.0px;top:1701.96px;font-size:27.80px;color:#bbbbbb;">03:45)</div><div class="t" style="left:2293.0px;top:1702.30px;font-size:27.40px;color:#bbbbbb;">69:30 (1 char)</div><div class="t" style="left:2492.0px;top:1703.91px;font-size:25.50px;color:#bbbbbb;">CRLF</div><div class="t" style="left:2582.0px;top:1702.89px;font-size:26.70px;color:#bbbbbb;">UTF-8</div><div class="t" style="left:2685.0px;top:1703.15px;font-size:26.40px;color:#bbbbbb;">4 spaces</div><svg class="a" style="left:2822.0px;top:1703.0px;" width="28.0" height="30.0" viewBox="0 0 28.0 30.0"><circle cx="5" cy="5" r="3.5" fill="#afb1b3"/><circle cx="21" cy="9" r="3.5" fill="#afb1b3"/><circle cx="5" cy="26" r="3.5" fill="#afb1b3"/><path d="M5 5 V26 M21 9 C21 17 6 16 5 24" fill="none" stroke="#afb1b3" stroke-width="3"/></svg><div class="t" style="left:2858.0px;top:1700.52px;font-size:29.50px;color:#bbbbbb;">main</div><svg class="a" style="left:2944.0px;top:1702.0px;" width="28.0" height="30.0" viewBox="0 0 28.0 30.0"><rect x="9" y="15" width="17" height="13" fill="#afb1b3"/><path d="M3 14 V9 A6 6 0 0 1 15 9" fill="none" stroke="#afb1b3" stroke-width="3"/></svg></body></html>
